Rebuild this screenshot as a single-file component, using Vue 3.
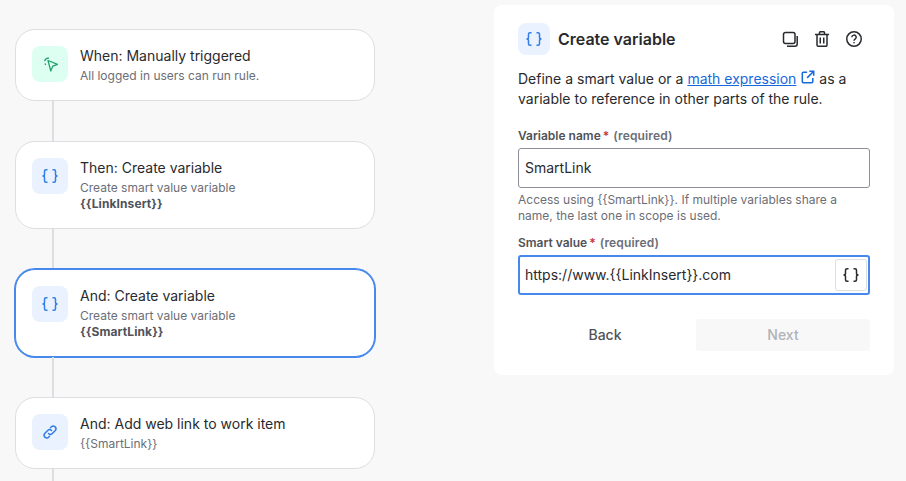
<script setup>
const braces = 'M5.5 1.75H4A1.5 1.5 0 0 0 2.5 3.25V6.5C2.5 7.400 1.800 8 .5 8c1.300 0 2 .6 2 1.500v3.250A1.500 1.500 0 0 0 4 14.250H5.500M10.500 1.750H12a1.500 1.500 0 0 1 1.500 1.500V6.500c0 .9.7 1.500 2 1.500-1.300 0-2 .6-2 1.500v3.250a1.500 1.500 0 0 1-1.500 1.500H10.500'
const linkInsert = '{' + '{LinkInsert}' + '}'
const smartLink = '{' + '{SmartLink}' + '}'
</script>

<template>
  <div class="page">
    <section class="flow">
      <article class="card">
        <span class="tile green">
          <svg class="icon" viewBox="0 0 16 16" fill="none" stroke="#22a06b" stroke-width="1.25" stroke-linejoin="round">
            <path d="M6 4.500 15.500 8.300 10.700 10.200 8.800 15Z" />
            <path d="M7 2.200A4 4 0 0 0 2.600 5.200" />
            <path d="M2.900 7.600A4 4 0 0 0 3.800 8.900" />
          </svg>
        </span>
        <div class="body">
          <h3>When: Manually triggered</h3>
          <p>All logged in users can run rule.</p>
        </div>
      </article>
      <div class="link"></div>
      <article class="card">
        <span class="tile">
          <svg class="icon" viewBox="0 0 16 16" fill="none" stroke="#357de8" stroke-width="1.5"><path :d="braces" /></svg>
        </span>
        <div class="body">
          <h3>Then: Create variable</h3>
          <p>Create smart value variable<br /><strong>{{ linkInsert }}</strong></p>
        </div>
      </article>
      <div class="link"></div>
      <article class="card active">
        <span class="tile">
          <svg class="icon" viewBox="0 0 16 16" fill="none" stroke="#357de8" stroke-width="1.5"><path :d="braces" /></svg>
        </span>
        <div class="body">
          <h3>And: Create variable</h3>
          <p>Create smart value variable<br /><strong>{{ smartLink }}</strong></p>
        </div>
      </article>
      <div class="link"></div>
      <article class="card">
        <span class="tile">
          <svg class="icon" viewBox="0 0 16 16" fill="none" stroke="#357de8" stroke-width="1.5" stroke-linecap="round">
            <path d="M6.500 9.500a2.700 2.700 0 0 0 3.800 0l3-3a2.700 2.700 0 0 0-3.800-3.800L8.500 3.700" />
            <path d="M9.500 6.500a2.700 2.700 0 0 0-3.800 0l-3 3a2.700 2.700 0 0 0 3.800 3.800l1-1" />
          </svg>
        </span>
        <div class="body">
          <h3>And: Add web link to work item</h3>
          <p>{{ smartLink }}</p>
        </div>
      </article>
      <div class="link tail"></div>
    </section>

    <aside class="panel">
      <header class="head">
        <span class="tile small">
          <svg class="icon" viewBox="0 0 16 16" fill="none" stroke="#357de8" stroke-width="1.5"><path :d="braces" /></svg>
        </span>
        <h2>Create variable</h2>
        <div class="actions">
          <button type="button" aria-label="Duplicate">
            <svg class="icon" viewBox="0 0 16 16" fill="none" stroke="#292a2e" stroke-width="1.5">
              <rect x="1.500" y="1.500" width="11.500" height="11" rx="2" />
              <path d="M15.200 5v8a2.200 2.200 0 0 1-2.200 2.200H5" />
            </svg>
          </button>
          <button type="button" aria-label="Delete">
            <svg class="icon" viewBox="0 0 16 16" fill="none" stroke="#292a2e" stroke-width="1.5">
              <path d="M1 3.500h14M5.500 3.500v-2a.75.75 0 0 1 .75-.75h3.500a.75.75 0 0 1 .75.75v2M3 3.500V14a1.250 1.250 0 0 0 1.250 1.250h7.500A1.250 1.250 0 0 0 13 14V3.500M6.250 6.500v6M9.750 6.500v6" />
            </svg>
          </button>
          <button type="button" aria-label="Help">
            <svg class="icon" viewBox="0 0 16 16" fill="none" stroke="#292a2e" stroke-width="1.5">
              <circle cx="8" cy="8" r="7.250" />
              <path d="M5.800 6.300a2.200 2.200 0 1 1 3.300 1.900c-.7.4-1.100.8-1.100 1.600" />
              <circle cx="8" cy="11.700" r=".5" fill="#292a2e" stroke-width=".6" />
            </svg>
          </button>
        </div>
      </header>

      <p class="desc">
        Define a smart value or a <a href="#">math expression</a><svg class="ext" viewBox="0 0 16 16" fill="none" stroke="#1868db" stroke-width="1.75">
          <path d="M7 2.500H2.750A1.250 1.250 0 0 0 1.500 3.750v9.500c0 .69.56 1.250 1.250 1.250h9.500c.69 0 1.250-.56 1.250-1.250V9M9.500 1.500h5v5M14.500 1.500 7 9" />
        </svg>
        as a variable to reference in other parts of the rule.
      </p>

      <label class="label first">Variable name<i>*</i> <span>(required)</span></label>
      <div class="field"><span>SmartLink</span></div>
      <p class="hint">Access using {{ smartLink }}. If multiple variables share a name, the last one in scope is used.</p>

      <label class="label second">Smart value<i>*</i> <span>(required)</span></label>
      <div class="field focus">
        <span>https://www.{{ linkInsert }}.com</span>
        <button type="button" class="insert" aria-label="Insert smart value">
          <svg class="icon" viewBox="0 0 16 16" fill="none" stroke="#292a2e" stroke-width="1.5"><path :d="braces" /></svg>
        </button>
      </div>

      <div class="buttons">
        <button type="button" class="btn back">Back</button>
        <button type="button" class="btn next" disabled>Next</button>
      </div>
    </aside>
  </div>
</template>

<style>
html, body { margin: 0; background: #f8f8f8; overflow: hidden; }
</style>

<style scoped>
.page {
  display: flex;
  align-items: flex-start;
  width: 906px;
  height: 481px;
  overflow: hidden;
  box-sizing: border-box;
  padding: 5px 12px 0 15px;
  background: #f8f8f8;
  font-family: Inter, "Liberation Sans", sans-serif;
  color: #292a2e;
}
.flow { width: 360px; margin-top: 24px; margin-right: 119px; flex: none; }
.card {
  display: flex;
  gap: 12px;
  box-sizing: border-box;
  padding: 16px;
  background: #fff;
  border: 1px solid #dddee1;
  border-radius: 20px;
}
.card.active { border-color: #4688ec; box-shadow: 0 0 0 1px #4688ec; }
.link { width: 2px; height: 40px; margin-left: 37px; background: #dddee1; }
.link.tail { height: 12px; }
.tile {
  display: flex;
  align-items: center;
  justify-content: center;
  flex: none;
  width: 36px;
  height: 36px;
  border-radius: 8px;
  background: #e9f2fe;
}
.tile.green { background: #dcfff1; }
.tile.small { width: 32px; height: 32px; }
.icon { display: block; width: 16px; height: 16px; }
.body h3 { margin: 0 0 2px; font-size: 14px; line-height: 20px; font-weight: 400; color: #292a2e; }
.body p { margin: 0; font-size: 12px; line-height: 16px; color: #6b6e76; }
.body strong { font-weight: 700; color: #505258; letter-spacing: .1px; }

.panel {
  width: 400px;
  flex: none;
  box-sizing: border-box;
  padding: 18px 24px 24px;
  background: #fff;
  border-radius: 8px;
}
.head { display: flex; align-items: center; gap: 8px; }
.head h2 { margin: 0; font-size: 16px; line-height: 20px; font-weight: 600; color: #292a2e; flex: 1; }
.actions { display: flex; }
.actions button {
  display: flex;
  align-items: center;
  justify-content: center;
  width: 32px;
  height: 32px;
  padding: 0;
  border: 0;
  background: none;
}
.desc { margin: 14px 0 0; font-size: 14px; line-height: 20px; color: #292a2e; }
.desc a { color: #1868db; text-decoration: underline; }
.ext { display: inline-block; width: 14px; height: 14px; vertical-align: 0; margin-left: 5px; }
.label { display: block; font-size: 12px; line-height: 16px; font-weight: 600; color: #505258; }
.label.first { margin-top: 19px; }
.label.second { margin-top: 11px; }
.label i { font-style: normal; color: #c9372c; margin-left: 2px; }
.label span { color: #6b6e76; font-weight: 600; margin-left: 1px; letter-spacing: .15px; }
.field {
  display: flex;
  align-items: center;
  justify-content: space-between;
  box-sizing: border-box;
  height: 40px;
  margin-top: 4px;
  padding: 0 6px;
  border: 1px solid #8c8f97;
  border-radius: 3px;
  background: #fff;
  font-size: 14px;
  line-height: 20px;
  color: #292a2e;
}
.field.focus { border: 2px solid #4688ec; padding: 0 1px 0 5px; }
.hint { margin: 4px 0 0; font-size: 12px; line-height: 16px; color: #6b6e76; }
.insert {
  display: flex;
  align-items: center;
  justify-content: center;
  box-sizing: border-box;
  width: 32px;
  height: 32px;
  padding: 0;
  background: #fff;
  border: 1px solid #dddee1;
  border-radius: 3px;
}
.buttons { display: flex; gap: 4px; margin-top: 24px; }
.btn {
  flex: 1;
  height: 32px;
  border: 0;
  border-radius: 3px;
  font: 500 14px/20px Inter, "Liberation Sans", sans-serif;
}
.back { background: transparent; color: #505258; }
.next { background: #f8f8f8; color: #b0b2b8; }
</style>
